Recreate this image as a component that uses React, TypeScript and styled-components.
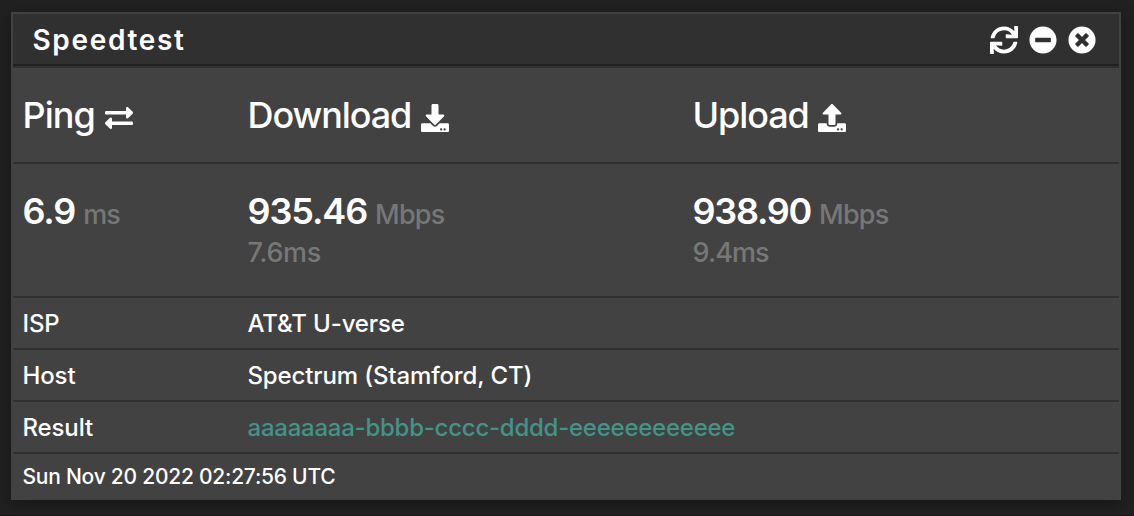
import React from "react";
import styled, { createGlobalStyle } from "styled-components";
import {
  FaSync,
  FaMinusCircle,
  FaTimesCircle,
  FaExchangeAlt,
  FaDownload,
  FaUpload,
} from "react-icons/fa";

const GlobalStyle = createGlobalStyle`
  * { box-sizing: border-box; }
  html, body { margin: 0; background: #212121; }
  body { font-family: Inter, "Liberation Sans", sans-serif; color: #fff; overflow: hidden; }
`;

const Page = styled.main`
  height: 516px;
  padding: 12px 13px 15px 11px;
  border-bottom: 1px solid #1a151a;
`;

const Panel = styled.section`
  height: 488px;
  background: #424242;
  border: 2px solid #424242;
  box-shadow: 0 4px 16px rgba(0, 0, 0, 0.35);
`;

const PanelHeader = styled.header`
  display: flex;
  align-items: center;
  justify-content: space-between;
  height: 52px;
  padding: 0 22.6px 0 19.5px;
  background: #303030;
  border-bottom: 2px solid #212121;
`;

const Title = styled.h2`
  margin: 0;
  font-size: 28px;
  font-weight: 600;
  line-height: 34px;
  letter-spacing: 1.65px;
  padding-top: 2px;
`;

const Actions = styled.div`
  display: flex;
  gap: 11px;
  padding-top: 1px;
  font-size: 28px;
`;

const IconButton = styled.button`
  display: flex;
  padding: 0;
  border: 0;
  background: none;
  color: #fff;
  font-size: inherit;
`;

const Row = styled.div<{ $height: number; $pad: number }>`
  display: grid;
  grid-template-columns: 225px 445px 1fr;
  height: ${(p) => p.$height}px;
  padding: ${(p) => p.$pad}px 0 0 9.5px;
  border-top: 2px solid #303030;
  white-space: nowrap;
`;

const Cell = styled.div<{ $spacing?: number }>`
  font-size: 24px;
  font-weight: 500;
  line-height: 30px;
  letter-spacing: ${(p) => p.$spacing ?? -0.13}px;
`;

const Heading = styled.h3<{ $spacing: number }>`
  display: flex;
  gap: 9.5px;
  margin: 0;
  font-size: 36px;
  font-weight: 500;
  line-height: 40px;
  letter-spacing: ${(p) => p.$spacing}px;

  svg {
    font-size: 28px;
    margin-top: 8.5px;
  }
`;

const Measure = styled.div``;

const Reading = styled.div<{ $spacing: number }>`
  display: flex;
  align-items: baseline;
  gap: 8px;
  font-size: 36px;
  font-weight: 600;
  line-height: 40px;
  letter-spacing: ${(p) => p.$spacing}px;
`;

const Muted = styled.span<{ $spacing?: number }>`
  color: #777;
  font-size: 27px;
  font-weight: 500;
  letter-spacing: ${(p) => p.$spacing ?? -0.8}px;
`;

const Latency = styled(Muted)`
  display: block;
  line-height: 34px;
  margin-top: 1px;
`;

const Link = styled.a`
  color: #419488;
`;

const Timestamp = styled.div`
  font-size: 21px;
  font-weight: 500;
  line-height: 26px;
  letter-spacing: -0.24px;
`;

export default function App() {
  return (
    <Page>
      <GlobalStyle />
      <Panel>
        <PanelHeader>
          <Title>Speedtest</Title>
          <Actions>
            <IconButton aria-label="Refresh"><FaSync /></IconButton>
            <IconButton aria-label="Minimize"><FaMinusCircle /></IconButton>
            <IconButton aria-label="Close"><FaTimesCircle /></IconButton>
          </Actions>
        </PanelHeader>
        <Row $height={96} $pad={27}>
          <Heading $spacing={-0.9}>Ping <FaExchangeAlt /></Heading>
          <Heading $spacing={-1.1}>Download <FaDownload /></Heading>
          <Heading $spacing={-1.1}>Upload <FaUpload /></Heading>
        </Row>
        <Row $height={134} $pad={27}>
          <Measure>
            <Reading $spacing={-1.1}>6.9 <Muted $spacing={-1}>ms</Muted></Reading>
          </Measure>
          <Measure>
            <Reading $spacing={-1.1}>935.46 <Muted>Mbps</Muted></Reading>
            <Latency $spacing={-0.3}>7.6ms</Latency>
          </Measure>
          <Measure>
            <Reading $spacing={-1.25}>938.90 <Muted>Mbps</Muted></Reading>
            <Latency $spacing={-0.9}>9.4ms</Latency>
          </Measure>
        </Row>
        <Row $height={52} $pad={11}>
          <Cell>ISP</Cell>
          <Cell>AT&amp;T U-verse</Cell>
        </Row>
        <Row $height={52} $pad={11}>
          <Cell>Host</Cell>
          <Cell>Spectrum (Stamford, CT)</Cell>
        </Row>
        <Row $height={52} $pad={11}>
          <Cell>Result</Cell>
          <Cell $spacing={-0.25}><Link>aaaaaaaa-bbbb-cccc-dddd-eeeeeeeeeeee</Link></Cell>
        </Row>
        <Row $height={46} $pad={10}>
          <Timestamp>Sun Nov 20 2022 02:27:56 UTC</Timestamp>
        </Row>
      </Panel>
    </Page>
  );
}
